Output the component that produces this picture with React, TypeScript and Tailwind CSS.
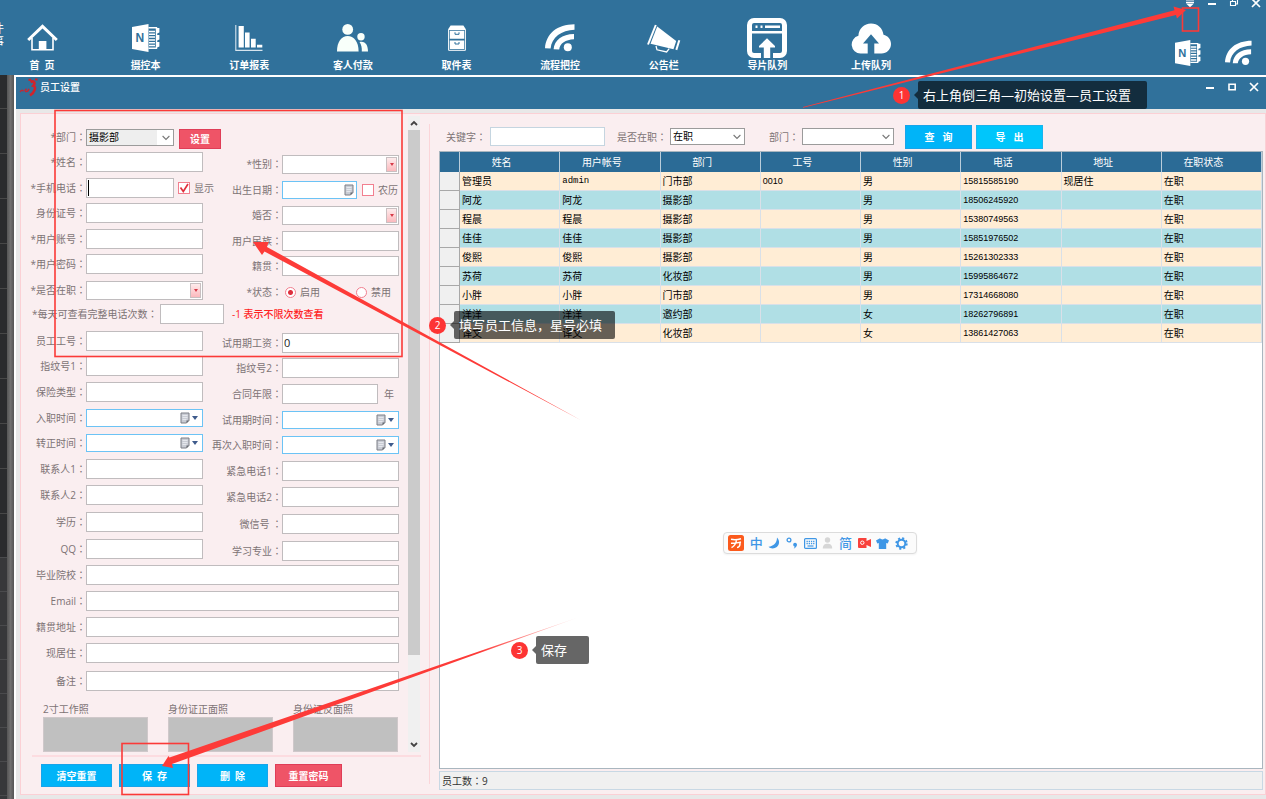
import React from "react";

type SvgProps = { className?: string };

const HomeIcon = () => (
  <svg width="31" height="28" viewBox="0 0 31 28" fill="none" stroke="#fff">
    <path d="M1.2 16 15.5 2.4 29.8 16" strokeWidth="3" />
    <path d="M5 14v11.8h21V14" strokeWidth="1.6" />
    <path d="M11.8 17h7.6v9h-7.6z" fill="#fff" stroke="none" />
  </svg>
);

const NotebookIcon = ({ className = "size-7" }: SvgProps) => (
  <svg className={className} viewBox="0 0 28 28">
    <path d="M0 3 16.5 0v28L0 25z" fill="#fff" />
    <text x="3.6" y="18.4" fontSize="12" fontWeight="700" fontFamily="Liberation Sans, sans-serif" fill="#30719b">
      N
    </text>
    <path d="M16.5 3.8h8v20.4h-8" fill="none" stroke="#fff" strokeWidth="1.4" />
    <path d="M17 7.5h6M17 10.3h6M17 13.1h6M17 15.9h6M17 18.7h6M17 21.5h6" stroke="#fff" strokeWidth="1.5" />
    <path d="M24 4h3.4v4.6L24 10zM24 11h3.4v4.6L24 17zM24 18h3.4v4.6L24 24z" fill="#fff" />
  </svg>
);

const BarsIcon = () => (
  <svg width="28" height="27" viewBox="0 0 28 27">
    <path d="M.8 0v25.4H27.5" fill="none" stroke="#d6e4ee" strokeWidth="1.1" />
    <path d="M3.6 1h5.2v21.4H3.6zM10 7.5h4.6v14.9H10zM16 13.7h4.7v8.7H16zM22 19.7h5.3v2.7H22z" fill="#fff" />
  </svg>
);

const PeopleIcon = () => (
  <svg width="31" height="28" viewBox="0 0 31 28" fill="#f8fffa">
    <circle cx="10.7" cy="5.4" r="5.4" />
    <path d="M0 27.5C0 17.5 4.7 12 10.7 12s10.9 5.5 10.9 15.5z" />
    <circle cx="24" cy="12.8" r="3.7" />
    <path d="M22.5 18c6-1.300 8.5 3.5 8.5 9.5h-6.200c.2-4-.5-7-2.300-9.500z" />
  </svg>
);

const CabinetIcon = () => (
  <svg width="18" height="26" viewBox="0 0 18 26">
    <path d="M2.6.5h12.800L18 4.500H0z" fill="#fff" />
    <path d="M.6 4.500h16.800v20.800H.6z" fill="none" stroke="#fff" strokeWidth="1" />
    <path d="M1.800 5.700h14.400v8.100H1.800zM1.800 15.400h14.400v8.600H1.800z" fill="#fff" />
    <path d="M7 7.300v2h4v-2M7 17v2h4v-2" fill="none" stroke="#30719b" strokeWidth="1" />
  </svg>
);

const FeedIcon = ({ className = "h-7 w-[30px]" }: SvgProps) => (
  <svg className={className} viewBox="0 0 30 28" fill="#fff">
    <path d="M0 24.300C1 9.800 12 .4 29.500.3v5.400C16.500 6.300 6.600 13 5.600 24.600z" />
    <path d="M8.600 25.300C9.400 16 17 10.100 29 9.900v5.400c-8.600.4-14 4-14.800 10.200z" />
    <circle cx="22.800" cy="23.200" r="4" />
  </svg>
);

const MegaphoneIcon = () => (
  <svg width="34" height="29" viewBox="0 0 34 29">
    <path d="M8.800 1 1 20.500" stroke="#fff" strokeWidth="2" />
    <path d="M10.200 2.600 29.200 17l-2.700 8.200-23-5.400z" fill="#fff" />
    <path d="m32.300 16.300-3 9.600" stroke="#fff" strokeWidth="2" />
    <path d="m9 22 1 3.800 9.600 2.200 2.600-3.400" fill="none" stroke="#fff" strokeWidth="1.300" />
  </svg>
);

const WindowUploadIcon = () => (
  <svg width="40" height="40" viewBox="0 0 40 40">
    <path
      d="M14 37.500H7A4.500 4.500 0 0 1 2.500 33V7A4.500 4.500 0 0 1 7 2.500h26A4.500 4.500 0 0 1 37.500 7v26a4.500 4.500 0 0 1-4.500 4.500h-7"
      fill="none"
      stroke="#fff"
      strokeWidth="5"
    />
    <path d="M3 14.200h34" stroke="#fff" strokeWidth="2.600" />
    <path d="M8.500 8.700h2M13.500 8.700h2M18 8.700h15" stroke="#fff" strokeWidth="2.400" />
    <path d="M20 20.200 28 28v1.500h-4.800V40h-6.400V29.500H12V28z" fill="#fff" />
  </svg>
);

const CloudUploadIcon = () => (
  <svg width="40" height="31" viewBox="0 0 40 31">
    <path
      d="M9.500 30.500A9 9 0 0 1 7.400 12.800C7.800 5.500 13.200.5 20 .5c6.600 0 11.800 4.600 12.500 11.300 4.300.9 7.500 4.700 7.500 9.200 0 5.300-4.300 9.500-9.500 9.500z"
      fill="#fff"
    />
    <path d="m20 11.300 8 9.200h-4.700V31h-6.600V20.500H12z" fill="#30719b" />
  </svg>
);

const navItems: { label: string; icon: React.ReactNode }[] = [
  { label: "首  页", icon: <HomeIcon /> },
  { label: "摄控本", icon: <NotebookIcon /> },
  { label: "订单报表", icon: <BarsIcon /> },
  { label: "客人付款", icon: <PeopleIcon /> },
  { label: "取件表", icon: <CabinetIcon /> },
  { label: "流程把控", icon: <FeedIcon /> },
  { label: "公告栏", icon: <MegaphoneIcon /> },
  { label: "导片队列", icon: <WindowUploadIcon /> },
  { label: "上传队列", icon: <CloudUploadIcon /> },
];

const MinimizeIcon = () => (
  <svg width="10" height="10" viewBox="0 0 10 10">
    <path d="M1 6h8" stroke="#fff" strokeWidth="2" />
  </svg>
);
const CloseIcon = () => (
  <svg width="10" height="10" viewBox="0 0 10 10">
    <path d="m1 1 8 8M9 1 1 9" stroke="#fff" strokeWidth="1.700" />
  </svg>
);

function Toolbar() {
  return (
    <header className="relative flex h-[75px] shrink-0 justify-between overflow-hidden bg-[#30719b] text-white">
      <span className="absolute -left-2 top-[22px] w-3 text-xs leading-[13px]">件事</span>
      <nav className="flex w-[913px] justify-between">
        {navItems.map((item) => (
          <button key={item.label} type="button" className="flex w-21 flex-col items-center">
            <span className="flex h-[58px] items-center justify-center pt-[18px]">{item.icon}</span>
            <span className="whitespace-pre font-bold leading-[14px]">{item.label}</span>
          </button>
        ))}
      </nav>
      <div className="flex flex-col items-end">
        <div className="-mt-0.5 flex gap-3 pr-[5px]">
          <button type="button" aria-label="菜单">
            <svg width="10" height="10" viewBox="0 0 10 10">
              <path d="M1 2h8M1 4.300h8" stroke="#fff" strokeWidth="1.200" />
              <path d="M1 5.500h8L5 9.300z" fill="#fff" />
            </svg>
          </button>
          <button type="button" aria-label="最小化">
            <MinimizeIcon />
          </button>
          <button type="button" aria-label="还原">
            <svg width="10" height="10" viewBox="0 0 10 10" fill="none" stroke="#fff" strokeWidth="1.100">
              <path d="M1.500 3.500h5v4h-5zM3.500 3V1.500h5V6H7" />
            </svg>
          </button>
          <button type="button" aria-label="关闭">
            <CloseIcon />
          </button>
        </div>
        <div className="flex gap-6 pr-3.5 pt-8">
          <button type="button" aria-label="摄控本">
            <NotebookIcon className="size-[26px]" />
          </button>
          <button type="button" aria-label="流程把控">
            <FeedIcon className="h-[26px] w-[27px]" />
          </button>
        </div>
      </div>
    </header>
  );
}

const CalendarIcon = () => (
  <svg width="10" height="12" viewBox="0 0 10 12">
    <path d="M1 1h8v7.500L6.500 11H1z" fill="#c9ccd4" stroke="#7d7f86" />
    <path d="M9 8.500H6.500V11z" fill="#5f6168" />
    <path d="M2.500 3.500h5M2.500 5.500h5M2.500 7.500h4" stroke="#eceef2" strokeWidth=".8" />
  </svg>
);

type Kind = "text" | "pick" | "date";
type FieldSpec = { id: string; label: string; kind?: Kind; value?: string };

const box = "border border-[#c0bcbe] bg-white";

function Control({ id, kind = "text", value, width = "w-[117px]" }: { id: string; kind?: Kind; value?: string; width?: string }) {
  if (kind === "pick") {
    return (
      <span className={`relative block ${width}`}>
        <select id={id} className={`block h-[19px] w-full appearance-none px-1 ${box}`}>
          <option></option>
        </select>
        <span className="pointer-events-none absolute inset-y-0.5 right-0.5 flex w-[11px] items-center justify-center border border-[#c9bfc1] bg-linear-to-b from-[#fdeced] to-[#fbb9bd]">
          <span className="border-x-2 border-t-3 border-x-transparent border-t-[#d63a48]" />
        </span>
      </span>
    );
  }
  if (kind === "date") {
    return (
      <span className={`flex h-[18px] items-center border border-[#6cc3f5] bg-white ${width}`}>
        <input id={id} className="h-full w-0 min-w-0 flex-1 px-1 outline-none" />
        <button type="button" aria-label="选择日期" className="flex items-center gap-0.5 pr-1">
          <CalendarIcon />
          <span className="border-x-3 border-t-4 border-x-transparent border-t-[#3f5b8c]" />
        </button>
      </span>
    );
  }
  return (
    <input id={id} defaultValue={value} className={`block h-5 px-px pb-0.5 text-[11px] text-[#222] outline-none ${box} ${width}`} />
  );
}

const Colon = () => <span className="[font-family:'Noto_Sans_CJK_TC',sans-serif]">：</span>;

function LeftLabel({ id, children }: { id: string; children: React.ReactNode }) {
  return (
    <label htmlFor={id} className="w-[65px] shrink-0 whitespace-pre text-right leading-5">
      {children}
      <Colon />
    </label>
  );
}
function RightLabel({ id, children }: { id: string; children: React.ReactNode }) {
  return (
    <label htmlFor={id} className="w-[79px] shrink-0 whitespace-pre text-right leading-5">
      {children}
      <Colon />
    </label>
  );
}

function Row({ gap, left, right }: { gap: string; left: React.ReactNode; right: React.ReactNode }) {
  return (
    <div className={`flex ${gap}`}>
      <div className="flex h-5 w-[182px] items-center">{left}</div>
      <div className="mt-0.5 flex h-5 items-center">{right}</div>
    </div>
  );
}

function PairRow({ gap, left, right }: { gap: string; left: FieldSpec; right: FieldSpec }) {
  return (
    <Row
      gap={gap}
      left={
        <>
          <LeftLabel id={left.id}>{left.label}</LeftLabel>
          <Control id={left.id} kind={left.kind} value={left.value} />
        </>
      }
      right={
        <>
          <RightLabel id={right.id}>{right.label}</RightLabel>
          <Control id={right.id} kind={right.kind} value={right.value} />
        </>
      }
    />
  );
}

function Check({ id, label, on }: { id: string; label: string; on?: boolean }) {
  return (
    <label htmlFor={id} className="flex items-center gap-1 leading-5">
      <span className="relative block size-3">
        <input id={id} type="checkbox" defaultChecked={on} className="peer block size-3 appearance-none border border-[#f27f8f] bg-white" />
        <svg className="pointer-events-none absolute inset-0 hidden peer-checked:block" width="12" height="12" viewBox="0 0 12 12">
          <path d="m2.500 5.500 2.800 4L10 2" fill="none" stroke="#e02f3c" strokeWidth="1.700" />
        </svg>
      </span>
      {label}
    </label>
  );
}

function Radio({ label, on }: { label: string; on?: boolean }) {
  return (
    <label className="flex items-center gap-1 leading-5">
      <input
        type="radio"
        name="state"
        defaultChecked={on}
        className="block size-[11px] appearance-none rounded-full border border-[#f27f8f] bg-white checked:bg-[radial-gradient(circle,#dd2f3d_0_2px,#fff_3px)]"
      />
      {label}
    </label>
  );
}

function Drop({ id, options, width, tint }: { id: string; options: string[]; width: string; tint?: string }) {
  return (
    <span className={`relative block ${width}`}>
      <select
        id={id}
        className={`block h-[17px] w-full appearance-none border border-[#9b9b9b] px-0.5 leading-[13px] text-black ${tint ?? "bg-white"}`}
      >
        {options.map((o) => (
          <option key={o}>{o}</option>
        ))}
      </select>
      <svg className="pointer-events-none absolute right-1 top-1.5" width="8" height="6" viewBox="0 0 8 6">
        <path d="m.6 1 3.400 3.400L7.400 1" fill="none" stroke="#777" strokeWidth="1.100" />
      </svg>
    </span>
  );
}

const wideRows: { gap: string; id: string; label: string }[] = [
  { gap: "pb-1.5", id: "school", label: "毕业院校" },
  { gap: "pb-1.5", id: "email", label: "Email" },
  { gap: "pb-1.5", id: "origin", label: "籍贯地址" },
  { gap: "pb-2", id: "address", label: "现居住" },
  { gap: "pb-0", id: "remark", label: "备注" },
];

function EmployeeForm() {
  return (
    <form className="w-[387px] pt-[13px]">
      <Row
        gap="pb-[3px]"
        left={
          <>
            <LeftLabel id="dept">*部门</LeftLabel>
            <Drop id="dept" options={["摄影部"]} width="w-[88px]" tint="bg-[linear-gradient(90deg,#eee_70px,#fff_70px)]" />
          </>
        }
        right={
          <button type="button" className="-ml-6 h-5 w-[42px] border border-[#df3d57] bg-[#ef5467] font-bold leading-4 text-white">
            设置
          </button>
        }
      />
      <PairRow gap="pb-1" left={{ id: "name", label: "*姓名" }} right={{ id: "sex", label: "*性别", kind: "pick" }} />
      <Row
        gap="pb-[3px]"
        left={
          <>
            <LeftLabel id="phone">*手机电话</LeftLabel>
            <div className="flex shrink-0 items-center">
              <span className="relative block">
                <Control id="phone" width="w-[88px]" />
                <span className="absolute left-0.5 top-0.5 h-4 w-px bg-black" />
              </span>
              <span className="pl-1">
                <Check id="show" label="显示" on />
              </span>
            </div>
          </>
        }
        right={
          <>
            <RightLabel id="birth">出生日期</RightLabel>
            <span className="flex h-[18px] w-[75px] items-center border border-[#6cc3f5] bg-white">
              <input id="birth" className="h-full w-0 min-w-0 flex-1 px-1 outline-none" />
              <button type="button" aria-label="选择日期" className="pr-0.5">
                <CalendarIcon />
              </button>
            </span>
            <span className="pl-[5px]">
              <Check id="lunar" label="农历" />
            </span>
          </>
        }
      />
      <PairRow gap="pb-1" left={{ id: "idno", label: "身份证号" }} right={{ id: "married", label: "婚否", kind: "pick" }} />
      <PairRow gap="pb-[3px]" left={{ id: "account", label: "*用户账号" }} right={{ id: "nation", label: "用户民族" }} />
      <PairRow gap="pb-1" left={{ id: "pwd", label: "*用户密码" }} right={{ id: "native", label: "籍贯" }} />
      <Row
        gap="pb-0.5"
        left={
          <>
            <LeftLabel id="onjob">*是否在职</LeftLabel>
            <Control id="onjob" kind="pick" />
          </>
        }
        right={
          <div className="flex h-5 items-center">
            <span className="w-[79px] text-right">
              *状态
              <Colon />
            </span>
            <span className="w-[74px] pl-[3px]">
              <Radio label="启用" on />
            </span>
            <Radio label="禁用" />
          </div>
        }
      />
      <div className="mb-[7px] flex h-5 items-center pl-[11px]">
        <label htmlFor="views" className="w-32 whitespace-nowrap">
          *每天可查看完整电话次数
          <Colon />
        </label>
        <Control id="views" width="w-16" />
        <span className="pl-2 font-medium text-[#ff1f1f]">-1 表示不限次数查看</span>
      </div>
      <PairRow gap="pb-[3px]" left={{ id: "jobno", label: "员工工号" }} right={{ id: "trialpay", label: "试用期工资", value: "0" }} />
      <PairRow gap="pb-1" left={{ id: "finger1", label: "指纹号1" }} right={{ id: "finger2", label: "指纹号2" }} />
      <Row
        gap="pb-1"
        left={
          <>
            <LeftLabel id="insurance">保险类型</LeftLabel>
            <Control id="insurance" />
          </>
        }
        right={
          <>
            <RightLabel id="contract">合同年限</RightLabel>
            <Control id="contract" width="w-24" />
            <span className="pl-1.5">年</span>
          </>
        }
      />
      <PairRow gap="pb-[3px]" left={{ id: "joined", label: "入职时间", kind: "date" }} right={{ id: "trial", label: "试用期时间", kind: "date" }} />
      <PairRow gap="pb-1" left={{ id: "regular", label: "转正时间", kind: "date" }} right={{ id: "rejoin", label: "再次入职时间", kind: "date" }} />
      <PairRow gap="pb-1" left={{ id: "contact1", label: "联系人1" }} right={{ id: "urgent1", label: "紧急电话1" }} />
      <PairRow gap="pb-[5px]" left={{ id: "contact2", label: "联系人2" }} right={{ id: "urgent2", label: "紧急电话2" }} />
      <PairRow gap="pb-[5px]" left={{ id: "degree", label: "学历" }} right={{ id: "wechat", label: "微信号 " }} />
      <PairRow gap="pb-1" left={{ id: "qq", label: "QQ" }} right={{ id: "major", label: "学习专业" }} />
      {wideRows.map((row) => (
        <div key={row.id} className={`flex ${row.gap}`}>
          <LeftLabel id={row.id}>{row.label}</LeftLabel>
          <Control id={row.id} width="w-[313px]" />
        </div>
      ))}
      <div className="mt-2.5 flex gap-5 pl-[22px]">
        {["2寸工作照", "身份证正面照", "身份证反面照"].map((title) => (
          <figure key={title} className="w-[105px]">
            <figcaption className="leading-4">{title}</figcaption>
            <div className="h-[35px] border border-[#cfc8ca] bg-[#c0c0c0]" />
          </figure>
        ))}
      </div>
    </form>
  );
}

const Chevron = ({ up }: { up?: boolean }) => (
  <svg width="8" height="6" viewBox="0 0 8 6">
    <path d={up ? "m1 5 3-3 3 3" : "m1 1 3 3 3-3"} fill="none" stroke="#444" strokeWidth="1.800" />
  </svg>
);

const rows = [
  ["管理员", "admin", "门市部", "0010", "男", "15815585190", "现居住", "在职"],
  ["阿龙", "阿龙", "摄影部", "", "男", "18506245920", "", "在职"],
  ["程晨", "程晨", "摄影部", "", "男", "15380749563", "", "在职"],
  ["佳佳", "佳佳", "摄影部", "", "男", "15851976502", "", "在职"],
  ["俊熙", "俊熙", "摄影部", "", "男", "15261302333", "", "在职"],
  ["苏荷", "苏荷", "化妆部", "", "男", "15995864672", "", "在职"],
  ["小胖", "小胖", "门市部", "", "男", "17314668080", "", "在职"],
  ["洋洋", "洋洋", "邀约部", "", "女", "18262796891", "", "在职"],
  ["译文", "译文", "化妆部", "", "女", "13861427063", "", "在职"],
];
const heads = ["姓名", "用户帐号", "部门", "工号", "性别", "电话", "地址", "在职状态"];

function cellFont(text: string) {
  if (/^\d+$/.test(text)) return "text-[9px] [font-family:'Liberation_Sans',sans-serif]";
  if (/^[a-z]+$/.test(text)) return "text-[9px] [font-family:'Liberation_Mono',monospace]";
  return "";
}

function StaffTable() {
  return (
    <div className="min-h-0 flex-1 border border-[#a9b6bf] bg-white">
      <table className="w-full table-fixed border-separate border-spacing-0 text-black">
        <thead>
          <tr className="h-5 bg-[#2b6b96] text-white">
            <th className="w-5 border-r border-[#b9cddb] p-0" />
            {heads.map((h) => (
              <th key={h} className="border-r border-[#b9cddb] p-0 pr-4 text-center font-normal leading-[18px]">
                {h}
              </th>
            ))}
          </tr>
        </thead>
        <tbody>
          {rows.map((r) => (
            <tr key={r[0]} className="h-[19px] odd:bg-[#ffedd5] even:bg-[#b0dfe5]">
              <td className="border-b border-r border-[#a8a8a8] bg-[#f0f0f0] p-0" />
              {r.map((c, i) => (
                <td key={i} className={`border-b border-r border-[#d9e0e8] p-0 pl-0.5 leading-[18px] ${cellFont(c)}`}>
                  {c}
                </td>
              ))}
            </tr>
          ))}
        </tbody>
      </table>
    </div>
  );
}

const blueButton = "border border-[#18a4ea] bg-[#00b4f8] font-bold leading-4 text-white whitespace-pre";

function ImeBar() {
  return (
    <div className="absolute left-[723px] top-[532px] flex h-[22px] w-[194px] items-center justify-between rounded border border-[#dcdcdc] bg-[#fbfbfb] pl-1 pr-2 text-[#3f97e6] shadow-xs">
      <svg width="16" height="16" viewBox="0 0 16 16">
        <rect width="16" height="16" rx="2.500" fill="#fb5a1c" />
        <path d="M3 4.300c4 .9 7 .4 10-.6M3 8.300c3.500.3 7-.6 10-1.300M8.500 5C8 8.500 6.500 11 3.500 12.700M12 7.500c.2 3-.8 5-3 5" fill="none" stroke="#fff" strokeWidth="1.500" />
      </svg>
      <span className="text-[13px] font-medium leading-5">中</span>
      <svg width="12" height="12" viewBox="0 0 12 12">
        <path d="M9 .5c3 3 2.600 7.200-.2 9.500-2.500 2-6.300 1.900-8.300-.3C5.500 9.300 9 6 9 .5z" fill="currentColor" />
      </svg>
      <svg width="12" height="12" viewBox="0 0 12 12">
        <circle cx="3" cy="3" r="1.900" fill="none" stroke="currentColor" strokeWidth="1.300" />
        <path d="M9 5.700c2.800 0 3 4.300-1.500 6 .8-.9 1.200-1.500 1.100-2.300C6.600 9 6.800 5.700 9 5.700z" fill="currentColor" />
      </svg>
      <svg width="13" height="11" viewBox="0 0 13 11" fill="none" stroke="currentColor">
        <rect x=".6" y=".6" width="11.800" height="9.800" rx="1" strokeWidth="1.200" />
        <path d="M2.500 3.300h8M2.500 5.500h8" strokeWidth="1.300" strokeDasharray="1.300 .9" />
        <path d="M3.500 8h6" strokeWidth="1.200" />
      </svg>
      <svg width="11" height="12" viewBox="0 0 11 12" fill="#d6d6d6">
        <circle cx="5.500" cy="3" r="2.700" />
        <path d="M.8 11.500c0-3.500 2-4.800 4.700-4.800s4.700 1.300 4.700 4.800z" />
      </svg>
      <span className="text-[13px] font-medium leading-5">简</span>
      <svg width="13" height="10" viewBox="0 0 13 10">
        <path d="M1 0h7.500v3L13 1v8L8.500 7v3H1a1 1 0 0 1-1-1V1a1 1 0 0 1 1-1z" fill="#f8423c" />
        <circle cx="4.300" cy="4.700" r="1.700" fill="none" stroke="#fff" />
      </svg>
      <svg width="13" height="11" viewBox="0 0 13 11">
        <path d="M4 .3c1 1.500 4 1.500 5 0L13 2.500l-1.300 3-1.500-.4V11H2.800V5.100l-1.500.4L0 2.500z" fill="currentColor" />
      </svg>
      <svg width="13" height="13" viewBox="0 0 13 13" fill="none" stroke="currentColor">
        <circle cx="6.500" cy="6.500" r="3.800" strokeWidth="2" />
        <circle cx="6.500" cy="6.500" r="5.300" strokeWidth="1.800" strokeDasharray="2.100 2.063" />
      </svg>
    </div>
  );
}

function Callout({ n, text, place, width }: { n: number; text: string; place: string; width: string }) {
  return (
    <div className={`absolute flex items-center text-white ${place}`}>
      <span className="flex size-[17px] items-center justify-center rounded-full bg-[#fd3434]">{n}</span>
      <span className="ml-1 border-y-4 border-r-4 border-y-transparent border-r-black/60" />
      <span className={`h-7 whitespace-nowrap rounded-xs bg-black/60 pl-[5px] text-[13px] leading-7 ${width}`}>{text}</span>
    </div>
  );
}

function Annotations() {
  return (
    <>
      <svg className="pointer-events-none absolute left-0 top-0" width="1266" height="799" viewBox="0 0 1266 799" fill="none">
        <defs>
          <linearGradient id="fade" x1="578" y1="618" x2="480" y2="652" gradientUnits="userSpaceOnUse">
            <stop offset="0" stopColor="#fd3b38" stopOpacity="0.100" />
            <stop offset="1" stopColor="#fd3b38" />
          </linearGradient>
        </defs>
        <g stroke="#fb3a38" strokeWidth="1.600">
          <rect x="55" y="110.500" width="347" height="246" />
          <rect x="122" y="743.500" width="66.500" height="51" />
          <rect x="1182.500" y="8" width="16" height="23" />
        </g>
        <path d="M803 107 1174.500 10.200 1173.500 6.500 1186 10 1177 18.500 1176 15 803 107.800z" fill="#fd3b38" />
        <path d="M581.500 420.500 267 247 268.500 242 253 242 262 255 264.500 251.500z" fill="#fd3b38" />
        <path d="M578 617.500 169.500 757.500 168.500 756 162 766 173 768 172 764z" fill="url(#fade)" />
      </svg>
      <Callout n={1} text="右上角倒三角—初始设置—员工设置" place="left-[893px] top-[81px]" width="w-[229px]" />
      <Callout n={2} text="填写员工信息，星号必填" place="left-[429px] top-[311px]" width="w-[161px]" />
      <Callout n={3} text="保存" place="left-[511px] top-[636px]" width="w-[53px]" />
    </>
  );
}

export default function App() {
  return (
    <div className="relative flex min-h-screen flex-col overflow-hidden bg-[#e8e8e8] text-[10px] text-[#7d7375] [font-family:'Open_Sans','Noto_Sans_CJK_SC',sans-serif]">
      <Toolbar />
      <div className="flex flex-1">
        <div className="flex w-[7px] flex-col">
          <div className="h-[482px] bg-[repeating-linear-gradient(#2a2b2d_0_33px,#484848_33px_34px,#2a2b2d_34px_45px)]" />
          <div className="flex-1 bg-[repeating-linear-gradient(#4a4b4d_0_1px,#37383a_1px_34px)]" />
        </div>
        <div className="w-[7px] bg-linear-to-r from-[#555] via-[#707070] to-[#555]" />
        <main className="flex min-w-0 flex-1 flex-col border-l-2 border-t-2 border-white">
          <div className="flex h-8 items-start justify-between bg-[#30719b] text-white">
            <div className="flex items-center pl-[3px]">
              <svg width="20" height="20" viewBox="0 0 20 20" fill="none" stroke="#d0232b">
                <path d="M11.500 5c3-1.500 5.500.5 2.800 3.800C17.500 9.500 16 15 11 18.500" strokeWidth="2.600" />
                <path d="M1 15c1.500-2.500 2.800-2.500 3.200-.5M5.500 14l2-2.200M6.200 14.500c1.800.5 3.300-1 3.800-2.700" strokeWidth="1.300" />
                <path d="M9.500 2.800h2.700M16 2.500h2.500" strokeWidth="2.200" />
              </svg>
              <h1 className="pl-px font-medium leading-4">员工设置</h1>
            </div>
            <div className="flex gap-3 pr-[7px] pt-[5px]">
              <button type="button" aria-label="最小化">
                <MinimizeIcon />
              </button>
              <button type="button" aria-label="最大化">
                <svg width="10" height="10" viewBox="0 0 10 10">
                  <path d="M2 2.200h6.200v5.600H2z" fill="none" stroke="#fff" strokeWidth="1.600" />
                </svg>
              </button>
              <button type="button" aria-label="关闭">
                <CloseIcon />
              </button>
            </div>
          </div>
          <div className="my-1 ml-1 flex flex-1 border border-[#fbd0d5] bg-[#faeef0]">
            <aside className="flex w-[408px] shrink-0 flex-col">
              <div className="flex">
                <EmployeeForm />
                <div className="mt-0.5 flex w-3 flex-col items-center bg-[#f0f0f0]">
                  <button type="button" aria-label="向上滚动" className="flex h-[14px] items-center">
                    <Chevron up />
                  </button>
                  <div className="h-[525px] w-full bg-[#cbcbcb]" />
                  <button type="button" aria-label="向下滚动" className="mt-auto flex h-[14px] items-center">
                    <Chevron />
                  </button>
                </div>
              </div>
              <hr className="ml-[11px] mr-2 mt-[3px] border-t-2 border-[#fcdce0]" />
              <div className="flex gap-[7px] pb-1.5 pl-5 pt-[7px]">
                <button type="button" className={`h-[23px] w-[71px] ${blueButton}`}>清空重置</button>
                <button type="button" className={`h-[23px] w-[71px] ${blueButton}`}>保  存</button>
                <button type="button" className={`h-[23px] w-[71px] ${blueButton}`}>删  除</button>
                <button type="button" className="h-[23px] w-[67px] border border-[#df3d57] bg-[#ef5467] font-bold leading-4 text-white">
                  重置密码
                </button>
              </div>
            </aside>
            <div className="my-2.5 w-px bg-[#fbd5d9]" />
            <section className="flex min-w-0 flex-1 flex-col pb-1 pl-[9px] pr-0.5">
              <div className="flex h-[37px] items-center pl-[7px] pt-2">
                <label htmlFor="keyword" className="w-11">
                  关键字
                  <Colon />
                </label>
                <input id="keyword" className="h-[19px] w-[115px] border border-[#c5d5e0] bg-white px-1 outline-none" />
                <label htmlFor="filterJob" className="ml-3 w-[53px]">
                  是否在职
                  <Colon />
                </label>
                <Drop id="filterJob" options={["在职", "离职"]} width="w-[75px]" />
                <label htmlFor="filterDept" className="ml-6 w-[33px]">
                  部门
                  <Colon />
                </label>
                <Drop id="filterDept" options={[""]} width="w-[92px]" />
                <button type="button" className={`ml-[11px] h-6 w-[67px] ${blueButton}`}>查   询</button>
                <button type="button" className="ml-1 h-6 w-[67px] whitespace-pre border border-[#18b4ee] bg-[#00c6fb] font-bold leading-4 text-white">
                  导   出
                </button>
              </div>
              <StaffTable />
              <footer className="mt-0.5 h-[19px] border border-[#c8d8e4] bg-[#f0f0f0] pl-0.5 leading-[18px] text-[#333]">
                员工数
                <Colon />9
              </footer>
            </section>
          </div>
        </main>
      </div>
      <ImeBar />
      <Annotations />
    </div>
  );
}
